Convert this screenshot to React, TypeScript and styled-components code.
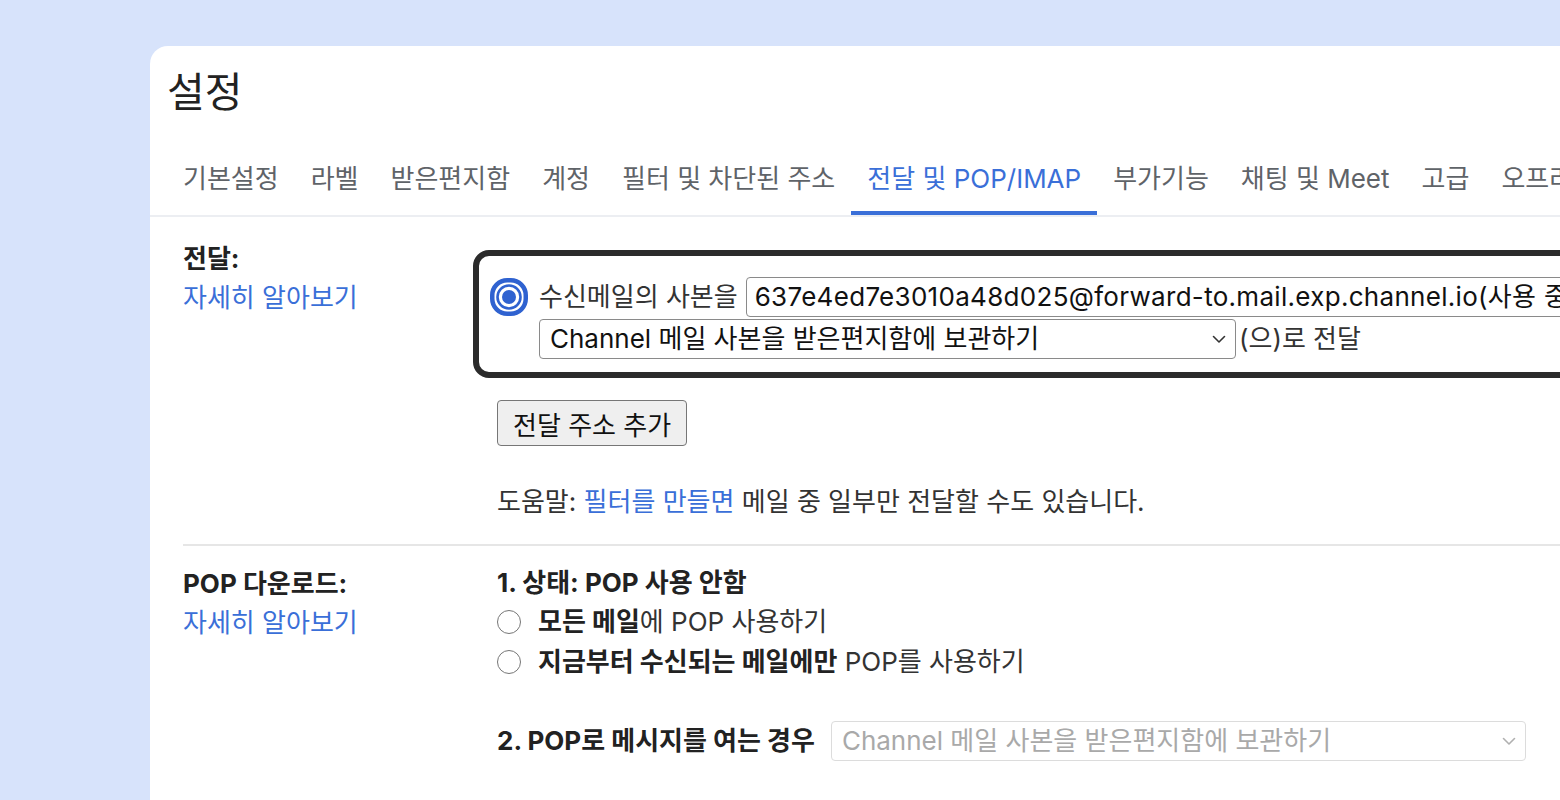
import React from 'react'
import styled, { createGlobalStyle } from 'styled-components'

const GlobalStyle = createGlobalStyle`
  html, body {
    margin: 0;
    padding: 0;
    background: #d7e3fb;
    overflow: hidden;
  }
  body {
    font-family: Inter, "Noto Sans CJK KR", sans-serif;
    color: #222;
  }
`

const TABS = [
  '기본설정',
  '라벨',
  '받은편지함',
  '계정',
  '필터 및 차단된 주소',
  '전달 및 POP/IMAP',
  '부가기능',
  '채팅 및 Meet',
  '고급',
  '오프라인',
]
const ACTIVE_TAB = '전달 및 POP/IMAP'

const Chevron = ({ color = '#333' }: { color?: string }) => (
  <svg width="14" height="9" viewBox="0 0 14 9" fill="none">
    <path d="M1.5 1.5 L7 7 L12.5 1.5" stroke={color} strokeWidth="1.6" strokeLinecap="round" strokeLinejoin="round" />
  </svg>
)

const FocusedRadio = () => (
  <svg width="38" height="38" viewBox="0 0 38 38">
    <rect x="2.25" y="2.25" width="33.5" height="33.5" rx="15" fill="none" stroke="#2f62d0" strokeWidth="4.5" />
    <circle cx="19" cy="19" r="11.5" fill="none" stroke="#2f62d0" strokeWidth="2.6" />
    <circle cx="19" cy="19" r="7" fill="#2f62d0" />
  </svg>
)

const App = () => {
  return (
    <>
      <GlobalStyle />
      <Page>
        <Card>
          <Title>설정</Title>
          <TabBar>
            {TABS.map((t) => (
              <Tab key={t} $active={t === ACTIVE_TAB}>{t}</Tab>
            ))}
          </TabBar>

          <Section>
            <LabelCol>
              <LabelTitle>전달:</LabelTitle>
              <LearnMore>자세히 알아보기</LearnMore>
            </LabelCol>
            <ContentCol>
              <Highlight>
                <ForwardRow>
                  <FocusedRadio />
                  <Text>수신메일의 사본을</Text>
                  <AddressBox>637e4ed7e3010a48d025@forward-to.mail.exp.channel.io(사용 중)</AddressBox>
                </ForwardRow>
                <ActionRow>
                  <SelectBox>
                    <span>Channel 메일 사본을 받은편지함에 보관하기</span>
                    <Chevron />
                  </SelectBox>
                  <Text>(으)로 전달</Text>
                </ActionRow>
              </Highlight>
              <AddButton>전달 주소 추가</AddButton>
              <HelpLine>
                도움말: <Link>필터를 만들면</Link> 메일 중 일부만 전달할 수도 있습니다.
              </HelpLine>
            </ContentCol>
          </Section>

          <Section $divided>
            <LabelCol>
              <LabelTitle>POP 다운로드:</LabelTitle>
              <LearnMore>자세히 알아보기</LearnMore>
            </LabelCol>
            <ContentCol>
              <Strong>1. 상태: POP 사용 안함</Strong>
              <OptionRow>
                <RadioCircle />
                <span><b>모든 메일</b>에 POP 사용하기</span>
              </OptionRow>
              <OptionRow>
                <RadioCircle />
                <span><b>지금부터 수신되는 메일에만</b> POP를 사용하기</span>
              </OptionRow>
              <OpenRow>
                <Strong>2. POP로 메시지를 여는 경우</Strong>
                <SelectBox $disabled $width={695}>
                  <span>Channel 메일 사본을 받은편지함에 보관하기</span>
                  <Chevron color="#b0b0b0" />
                </SelectBox>
              </OpenRow>
            </ContentCol>
          </Section>
        </Card>
      </Page>
    </>
  )
}

const Page = styled.div`
  width: 1560px;
  height: 800px;
  box-sizing: border-box;
  padding: 46px 0 0 150px;
  overflow: hidden;
`

const Card = styled.div`
  width: 1480px;
  height: 754px;
  background: #fff;
  border-top-left-radius: 18px;
  overflow: hidden;
`

const Title = styled.h1`
  margin: 0;
  padding: 18px 0 0 17px;
  font-size: 41px;
  line-height: 56px;
  font-weight: 400;
  color: #222;
`

const TabBar = styled.div`
  display: flex;
  margin-top: 18px;
  padding-left: 17px;
  border-bottom: 2px solid #eceef2;
  white-space: nowrap;
`

const Tab = styled.div<{ $active?: boolean }>`
  box-sizing: border-box;
  height: 77px;
  padding: 4px 16px 0;
  display: flex;
  align-items: center;
  flex-shrink: 0;
  font-size: 26px;
  color: ${(p) => (p.$active ? '#3a6fd8' : '#5f6368')};
  border-bottom: 4px solid ${(p) => (p.$active ? '#3a6fd8' : 'transparent')};
`

const Section = styled.div<{ $divided?: boolean }>`
  display: grid;
  grid-template-columns: 314px 1fr;
  margin-left: 33px;
  padding: ${(p) => (p.$divided ? '18px 0 0' : '22px 0 23px')};
  border-top: ${(p) => (p.$divided ? '2px solid #e6e6e6' : 'none')};
  font-size: 26px;
  line-height: 38px;
`

const LabelCol = styled.div`
  display: flex;
  flex-direction: column;
  line-height: 39px;
`

const LabelTitle = styled.div`
  font-weight: 700;
  color: #222;
`

const LearnMore = styled.a`
  color: #3a6fd8;
  cursor: pointer;
`

const ContentCol = styled.div`
  display: flex;
  flex-direction: column;
  align-items: flex-start;
  min-width: 0;
`

const Highlight = styled.div`
  align-self: stretch;
  margin: 11px 0 0 -24px;
  padding: 21px 0 13px 11px;
  border: 6px solid #2b2b2b;
  border-radius: 16px;
`

const ForwardRow = styled.div`
  display: flex;
  align-items: center;
  height: 40px;
  gap: 8px;
  white-space: nowrap;

  svg {
    flex-shrink: 0;
    margin-right: 3px;
  }
`

const Text = styled.span`
  color: #333;
  white-space: nowrap;
`

const AddressBox = styled.div`
  box-sizing: border-box;
  height: 40px;
  padding: 0 8px;
  display: flex;
  align-items: center;
  border: 1.5px solid #8a8a8a;
  border-radius: 4px;
  color: #111;
  letter-spacing: 0.3px;
  white-space: nowrap;
  flex-shrink: 0;
`

const ActionRow = styled.div`
  display: flex;
  align-items: center;
  margin: 2px 0 0 49px;
  gap: 3px;
`

const SelectBox = styled.div<{ $disabled?: boolean; $width?: number }>`
  box-sizing: border-box;
  width: ${(p) => p.$width ?? 697}px;
  height: 40px;
  padding: 0 9px 0 10px;
  display: flex;
  align-items: center;
  justify-content: space-between;
  border: 1.5px solid ${(p) => (p.$disabled ? '#dcdcdc' : '#8a8a8a')};
  border-radius: 4px;
  color: ${(p) => (p.$disabled ? '#a9a9a9' : '#111')};
  white-space: nowrap;
  flex-shrink: 0;
`

const AddButton = styled.button`
  margin-top: 22px;
  box-sizing: border-box;
  height: 46px;
  padding: 0 15px;
  font-family: inherit;
  font-size: 26px;
  color: #111;
  background: #efefef;
  border: 1.5px solid #767676;
  border-radius: 4px;
`

const HelpLine = styled.div`
  margin-top: 37px;
  color: #333;
`

const Link = styled.a`
  color: #3a6fd8;
`

const Strong = styled.div`
  font-weight: 700;
  color: #222;
  white-space: nowrap;
`

const OptionRow = styled.div`
  display: flex;
  align-items: center;
  gap: 17px;
  height: 40px;
  color: #333;

  b {
    font-weight: 700;
    color: #222;
  }
`

const RadioCircle = styled.span`
  box-sizing: border-box;
  width: 24px;
  height: 24px;
  border-radius: 50%;
  border: 1.5px solid #767676;
  flex-shrink: 0;
`

const OpenRow = styled.div`
  display: flex;
  align-items: center;
  gap: 16px;
  margin-top: 39px;
`

export default App
